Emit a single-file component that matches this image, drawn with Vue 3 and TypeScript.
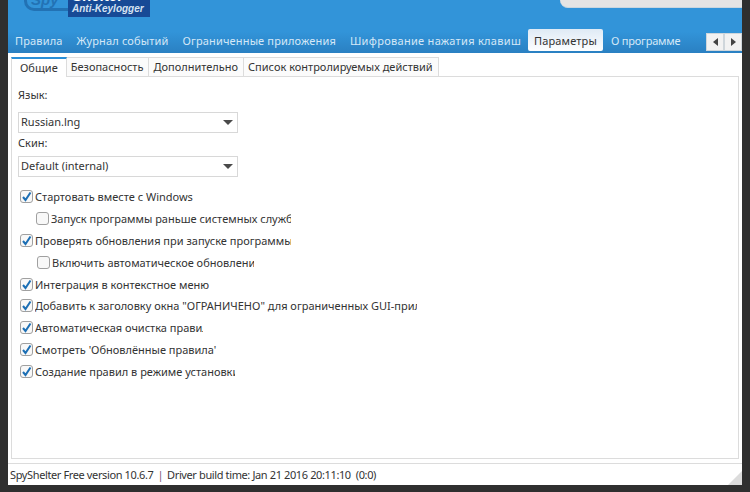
<script setup lang="ts">
const navItems = [
  { label: 'Правила' },
  { label: 'Журнал событий' },
  { label: 'Ограниченные приложения' },
  { label: 'Шифрование нажатия клавиш' },
  { label: 'Параметры', active: true },
  { label: 'О программе' },
]

const subTabs = ['Общие', 'Безопасность', 'Дополнительно', 'Список контролируемых действий']

// width = how much of the label the (too small) control shows
const options = [
  { text: 'Стартовать вместе с Windows', checked: true, indent: 0, width: 200 },
  { text: 'Запуск программы раньше системных служб', checked: false, indent: 16, width: 240 },
  { text: 'Проверять обновления при запуске программы', checked: true, indent: 0, width: 256 },
  { text: 'Включить автоматическое обновление', checked: false, indent: 17, width: 202 },
  { text: 'Интеграция в контекстное меню', checked: true, indent: 0, width: 240 },
  { text: 'Добавить к заголовку окна "ОГРАНИЧЕНО" для ограниченных GUI-приложений', checked: true, indent: 0, width: 382 },
  { text: 'Автоматическая очистка правил', checked: true, indent: 0, width: 168 },
  { text: "Смотреть 'Обновлённые правила'", checked: true, indent: 0, width: 240 },
  { text: 'Создание правил в режиме установки', checked: true, indent: 0, width: 200 },
]
</script>

<template>
  <div class="screen">
    <div class="window">
      <header class="header">
        <div class="top">
          <div class="logo">
            <div class="logo-spy">Spy</div>
            <div class="logo-box">
              <span class="logo-name">Shelter</span>
              <span class="logo-sub">Anti-Keylogger</span>
            </div>
          </div>
          <div class="search"></div>
        </div>
        <nav class="nav">
          <span
            v-for="item in navItems"
            :key="item.label"
            :class="['nav-item', { active: item.active }]"
          >{{ item.label }}</span>
          <div class="arrows">
            <button type="button" class="arrow"><i class="tri left"></i></button>
            <button type="button" class="arrow"><i class="tri right"></i></button>
          </div>
        </nav>
      </header>

      <main class="body">
        <div class="tabs">
          <span
            v-for="(tab, i) in subTabs"
            :key="tab"
            :class="['tab', { current: i === 0 }]"
          >{{ tab }}</span>
        </div>
        <section class="panel">
          <div class="field-label">Язык:</div>
          <div class="select"><span>Russian.lng</span><i class="caret"></i></div>
          <div class="field-label second">Скин:</div>
          <div class="select"><span>Default (internal)</span><i class="caret"></i></div>

          <ul class="options">
            <li
              v-for="opt in options"
              :key="opt.text"
              class="option"
              :style="{ paddingLeft: opt.indent + 'px' }"
            >
              <span :class="['box', { on: opt.checked }]">
                <svg v-if="opt.checked" width="11" height="11" viewBox="0 0 11 11">
                  <path d="M2 6 L4.5 9 L9.5 1.5" fill="none" stroke="#1c6fb5" stroke-width="2" />
                </svg>
              </span>
              <span class="option-text" :style="{ width: opt.width + 'px' }">{{ opt.text }}</span>
            </li>
          </ul>
        </section>
      </main>

      <footer class="status">
        <span>SpyShelter Free version 10.6.7</span>
        <span class="sep">|</span>
        <span>Driver build time: Jan 21 2016 20:11:10&nbsp; (0:0)</span>
        <i class="grip"></i>
      </footer>
    </div>
  </div>
</template>

<style>
html,
body {
  margin: 0;
  background: #2f2f2f;
}
</style>

<style scoped>
.screen {
  width: 750px;
  height: 492px;
  background: #2f2f2f;
  padding: 0 8px 7px;
  box-sizing: border-box;
  font-family: 'Noto Sans', sans-serif;
  font-size: 11px;
  color: #333;
  overflow: hidden;
}

.window {
  height: 100%;
  display: flex;
  flex-direction: column;
  background: #fff;
}

.header {
  height: 53px;
  flex: none;
  background: linear-gradient(#3294d9 60%, #2a80c2);
  display: flex;
  flex-direction: column;
  justify-content: space-between;
}

.top {
  height: 20px;
  display: flex;
  justify-content: space-between;
  overflow: hidden;
}

.logo {
  display: flex;
  margin-left: 16px;
}

.logo-spy {
  width: 44px;
  height: 14px;
  margin-top: -3px;
  border: 3px solid #2272b4;
  border-right: none;
  border-top: none;
  border-radius: 0 0 0 10px;
  color: #2272b4;
  font: italic bold 15px 'Liberation Sans', sans-serif;
  line-height: 6px;
  padding-left: 4px;
  box-sizing: border-box;
}

.logo-box {
  width: 82px;
  height: 17px;
  background: #174a96;
  color: #fff;
  display: flex;
  flex-direction: column;
  padding-left: 4px;
  box-sizing: border-box;
  overflow: hidden;
}

.logo-name {
  height: 5px;
  font: bold 15px/1px 'Liberation Sans', sans-serif;
  margin-top: -2px;
  transform: translateY(-3px);
}

.logo-sub {
  font: italic bold 10px/12px 'Liberation Sans', sans-serif;
  color: #d5e2f2;
}

.search {
  width: 182px;
  height: 7px;
  background: #e4e4e4;
  border-bottom: 1px solid #c9d6df;
  border-radius: 0 0 0 8px;
}

.nav {
  height: 24px;
  display: flex;
  align-items: flex-start;
  letter-spacing: 0.15px;
}

.nav-item {
  padding: 0 7px;
  height: 22px;
  line-height: 23px;
  color: #d5e8f7;
  white-space: nowrap;
}

.nav-item:nth-child(4) {
  letter-spacing: 0.3px;
}

.nav-item:nth-child(6) {
  letter-spacing: -0.2px;
  padding-left: 6px;
}

.nav-item.active {
  padding: 0 6px;
  margin: 0 2px 0 0;
  background: linear-gradient(#dfeaf5, #fdfeff);
  color: #333;
  border-radius: 2px;
}

.arrows {
  margin-left: auto;
  margin-top: 4px;
  display: flex;
}

.arrow {
  width: 18px;
  height: 18px;
  padding: 0;
  border: 1px solid #cfd6db;
  background: #f2f2f2;
  display: flex;
  align-items: center;
  justify-content: center;
}

.tri {
  width: 0;
  height: 0;
  border-top: 4px solid transparent;
  border-bottom: 4px solid transparent;
}

.tri.left {
  border-right: 5px solid #444;
}

.tri.right {
  border-left: 5px solid #444;
}

.body {
  flex: 1;
  display: flex;
  flex-direction: column;
  padding: 4px 3px 4px 3px;
  min-height: 0;
}

.tabs {
  display: flex;
  height: 20px;
  flex: none;
  margin-bottom: -1px;
  position: relative;
  z-index: 1;
  align-items: flex-end;
}

.tab {
  height: 18px;
  line-height: 17px;
  padding: 0 5px 0 4px;
  background: #fbfbfb;
  border: 1px solid #dcdcdc;
  border-left: none;
  white-space: nowrap;
}

.tab.current {
  height: 18px;
  padding: 0 8px;
  background: #fff;
  border: 1px solid #dcdcdc;
  border-top: 2px solid #2a8fd8;
  border-bottom: none;
  line-height: 17px;
}

.panel {
  flex: 1;
  border: 1px solid #dcdcdc;
  padding: 11px 6px 0;
  min-height: 0;
}

.field-label {
  height: 13px;
  line-height: 13px;
}

.field-label.second {
  margin-top: 3px;
}

.select {
  width: 220px;
  height: 21px;
  margin-top: 11px;
  border: 1px solid #d8d8d8;
  box-sizing: border-box;
  background: #fff;
  display: flex;
  align-items: center;
  justify-content: space-between;
  padding: 0 4px 3px 2px;
}

.field-label.second + .select {
  margin-top: 7px;
}

.caret {
  width: 0;
  height: 0;
  margin-top: 3px;
  border-left: 5px solid transparent;
  border-right: 5px solid transparent;
  border-top: 5px solid #4a4a4a;
}

.options {
  list-style: none;
  margin: 9px 0 0;
  padding: 0;
  display: flex;
  flex-direction: column;
}

.option {
  height: 21.8px;
  display: flex;
  align-items: center;
}

.box {
  width: 13px;
  height: 13px;
  box-sizing: border-box;
  border: 1px solid #a0a0a0;
  border-radius: 3px;
  background: #f8f8f8;
  margin: 0 2px;
  display: flex;
  align-items: center;
  justify-content: center;
  flex: none;
}

.option-text {
  display: block;
  overflow: hidden;
  white-space: nowrap;
}

.status {
  height: 21px;
  flex: none;
  border-top: 1px solid #dcdcdc;
  display: flex;
  align-items: center;
  gap: 4px;
  padding-left: 2px;
  position: relative;
  letter-spacing: -0.38px;
}

.sep {
  color: #7a5a78;
}

.grip {
  position: absolute;
  right: 0;
  bottom: 0;
  width: 0;
  height: 0;
  border-left: 14px solid transparent;
  border-bottom: 14px solid #dcdcdc;
}
</style>
